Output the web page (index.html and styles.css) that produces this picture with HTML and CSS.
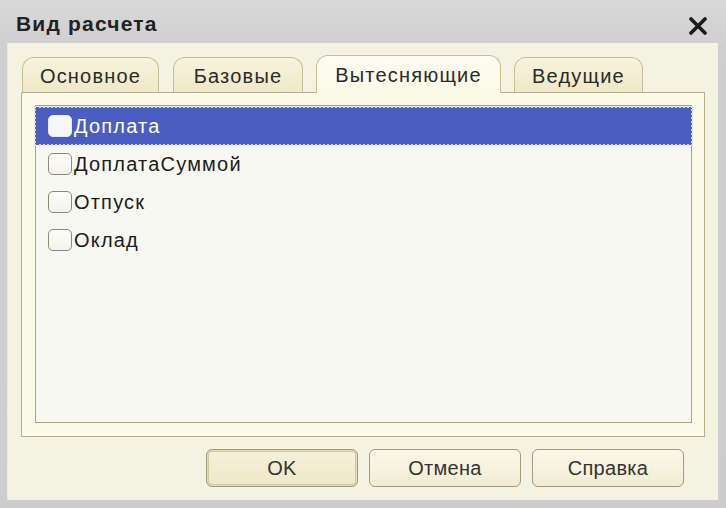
FILE: index.html
```html
<!DOCTYPE html>
<html lang="ru">
<head>
<meta charset="utf-8">
<title>Вид расчета</title>
<link rel="stylesheet" href="styles.css">
</head>
<body>
<div class="window">
  <div class="titlebar">
    <span class="title">Вид расчета</span>
    <svg class="close" viewBox="0 0 20 18" width="20" height="18">
      <path d="M3 2 L17 16 M17 2 L3 16" stroke="#1a1a1a" stroke-width="3.6" stroke-linecap="round"/>
    </svg>
  </div>
  <div class="content">
    <div class="tabs">
      <div class="tab t1">Основное</div>
      <div class="tab t2">Базовые</div>
      <div class="tab t3 active">Вытесняющие</div>
      <div class="tab t4">Ведущие</div>
    </div>
    <div class="panel">
      <div class="list">
        <div class="row selected"><span class="check"></span><span class="label">Доплата</span></div>
        <div class="row"><span class="check"></span><span class="label">ДоплатаСуммой</span></div>
        <div class="row"><span class="check"></span><span class="label">Отпуск</span></div>
        <div class="row"><span class="check"></span><span class="label">Оклад</span></div>
      </div>
    </div>
    <div class="buttons">
      <div class="btn default">OK</div>
      <div class="btn">Отмена</div>
      <div class="btn">Справка</div>
    </div>
  </div>
</div>
</body>
</html>
```

FILE: styles.css
```css
html, body {
  margin: 0;
  padding: 0;
}
body {
  width: 726px;
  height: 508px;
  overflow: hidden;
  background: #c6c6c6;
  font-family: "Liberation Sans", Arial, sans-serif;
}
.window {
  width: 726px;
  height: 508px;
  display: flex;
  flex-direction: column;
  box-sizing: border-box;
  background: linear-gradient(#cfcfcf, #cdcdcd);
}
.titlebar {
  height: 43px;
  flex: none;
  display: flex;
  align-items: center;
  justify-content: space-between;
  padding: 0 18px 0 16px;
  background: linear-gradient(#d8d8d8, #d0d0d0);
}
.title {
  font-weight: bold;
  font-size: 21px;
  color: #222;
  letter-spacing: 1.2px;
  margin-top: 5px;
}
.close {
  display: block;
  margin-top: 8px;
}
.content {
  flex: 1;
  margin: 0 8px 8px 7px;
  background: #f4f2e3;
  border-left: 1px solid #e9e9e9;
  display: flex;
  flex-direction: column;
  padding: 12px 13px 13px 13px;
  box-sizing: border-box;
}
.tabs {
  display: flex;
  align-items: flex-end;
  height: 37px;
  flex: none;
  position: relative;
  z-index: 1;
}
.tab {
  height: 35px;
  box-sizing: border-box;
  border: 1px solid #c7bf93;
  border-bottom: none;
  border-radius: 12px 12px 0 0;
  background: linear-gradient(#f7f3dd, #efe8c9);
  font-size: 20px;
  color: #2a2a2a;
  display: flex;
  align-items: center;
  justify-content: center;
  padding-top: 3px;
  letter-spacing: 1.2px;
}
.t1 { width: 137px; margin-left: 1px; }
.t2 { width: 130px; margin-left: 14px; }
.t3 { width: 185px; margin-left: 13px; }
.t4 { width: 129px; margin-left: 13px; }
.tab.active {
  height: 38px;
  margin-bottom: -1px;
  background: linear-gradient(#fdfcf2, #fcfae9);
  border-color: #c7bf93;
  padding-top: 1px;
}
.panel {
  flex: 1;
  width: 684px;
  box-sizing: border-box;
  border: 1px solid #b5ae88;
  background: #fcfae8;
  padding: 12px 12px 13px 13px;
  display: flex;
  flex-direction: column;
}
.list {
  flex: 1;
  border: 1px solid #a9a585;
  background: #f8f8f3;
  padding: 1px 0 0 0;
}
.row {
  height: 38px;
  box-sizing: border-box;
  display: flex;
  align-items: center;
  padding-left: 12px;
  font-size: 20px;
  color: #1c1c1c;
}
.row.selected {
  background: #4b5ebf;
  color: #ffffff;
  outline: 2px dotted #d8d8e0;
  outline-offset: -1px;
  margin: 0 -1px 0 -1px;
  padding-left: 13px;
}
.check {
  width: 24px;
  height: 22px;
  box-sizing: border-box;
  border: 1px solid #8c8a73;
  border-radius: 5px;
  background: linear-gradient(#fdfdfb, #f3f2ea);
  margin-right: 2px;
  flex: none;
}
.row.selected .check {
  background: #f6f6f8;
  border-color: #e8e8ee;
}
.label {
  letter-spacing: 1.2px;
}
.buttons {
  display: flex;
  justify-content: flex-end;
  gap: 11px;
  margin-top: 12px;
  padding-right: 21px;
  height: 38px;
  flex: none;
}
.btn {
  width: 152px;
  height: 38px;
  box-sizing: border-box;
  border: 1px solid #9f9b7d;
  border-radius: 6px;
  background: linear-gradient(#fbf8e9, #f2ecd3);
  font-size: 20px;
  color: #333;
  display: flex;
  align-items: center;
  justify-content: center;
  letter-spacing: 0.3px;
}
.btn.default {
  box-shadow: inset 0 0 0 1px #e4dcb8, inset 0 0 0 2px #d1c9a2;
  background: linear-gradient(#f6f1dc, #efe7c7);
}
```
